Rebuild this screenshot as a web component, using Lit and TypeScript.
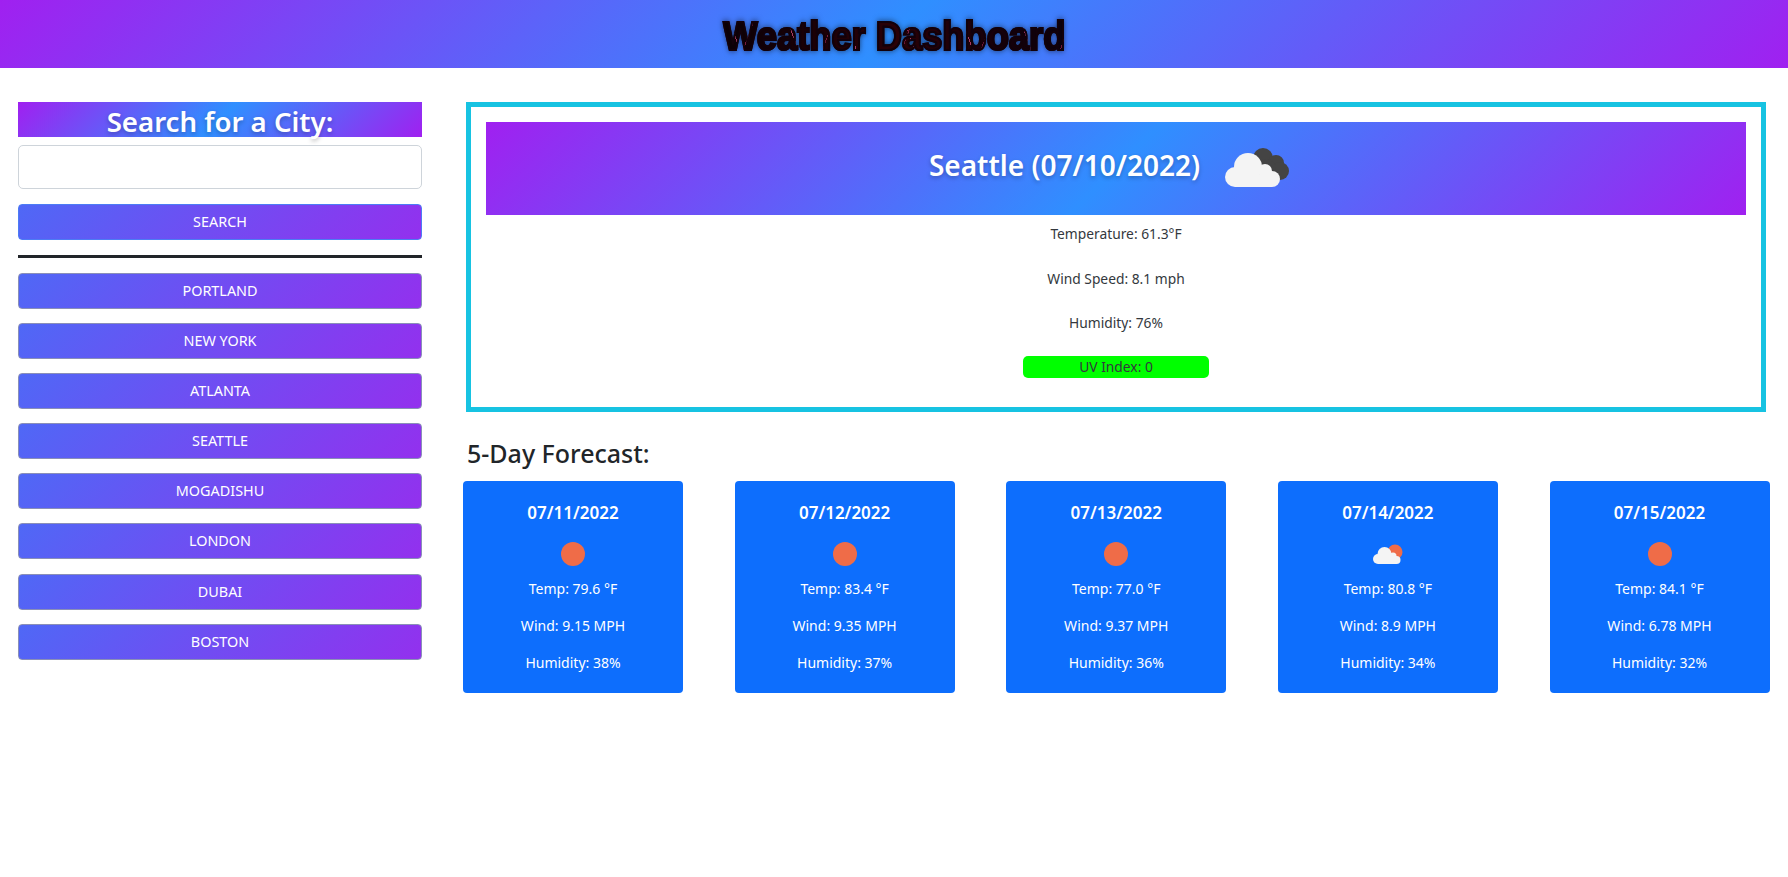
import { LitElement, html, css, svg } from 'lit';
import { customElement, state } from 'lit/decorators.js';

interface Forecast {
  date: string;
  temp: string;
  wind: string;
  humidity: string;
  cloudy?: boolean;
}

// same cloud for the big icon (110x70) and, scaled down, the small one
const cloud = svg`
  <circle cx="48" cy="28" r="14" fill="#f4f4f4" />
  <circle cx="35" cy="38" r="10" fill="#f4f4f4" />
  <circle cx="65" cy="32" r="7" fill="#f4f4f4" />
  <circle cx="72" cy="40" r="8" fill="#f4f4f4" />
  <rect x="35" y="36" width="37" height="12" fill="#f4f4f4" />
`;

@customElement('app-root')
export class AppRoot extends LitElement {
  @state() private cities = ['Portland', 'New York', 'Atlanta', 'Seattle', 'Mogadishu', 'London', 'Dubai', 'Boston'];
  @state() private forecast: Forecast[] = [
    { date: '07/11/2022', temp: '79.6', wind: '9.15', humidity: '38' },
    { date: '07/12/2022', temp: '83.4', wind: '9.35', humidity: '37' },
    { date: '07/13/2022', temp: '77.0', wind: '9.37', humidity: '36' },
    { date: '07/14/2022', temp: '80.8', wind: '8.9', humidity: '34', cloudy: true },
    { date: '07/15/2022', temp: '84.1', wind: '6.78', humidity: '32' },
  ];

  static styles = css`
    :host {
      display: block;
      min-height: 877px;
      background: #fff;
      color: #212529;
      font-family: "Noto Sans", "Open Sans", sans-serif;
    }
    .banner {
      background-image: linear-gradient(135deg, #a020f0, #2f8fff, #a020f0);
    }
    header {
      height: 68px;
      display: flex;
      align-items: center;
      justify-content: center;
    }
    header h1 {
      margin: 4px 0 0;
      font-family: "Liberation Sans", sans-serif;
      font-size: 41px;
      font-weight: 700;
      line-height: 60px;
      white-space: nowrap;
      transform: scaleX(0.885);
      -webkit-text-stroke: 2.2px #12000a;
      /* scratched texture inside the letters */
      background-image:
        repeating-linear-gradient(68deg, transparent 0 23px, #a83a62 23px 24px, transparent 24px 61px),
        repeating-linear-gradient(112deg, transparent 0 37px, #7a1c3c 37px 38px, transparent 38px 83px),
        linear-gradient(90deg, #0a0006, #2a0006 50%, #0a000c);
      -webkit-background-clip: text;
      background-clip: text;
      -webkit-text-fill-color: transparent;
      filter: drop-shadow(0 0 3px rgba(0, 0, 0, 0.55));
    }
    .page {
      display: flex;
      padding: 34px 0 0 18px;
    }
    aside {
      width: 404px;
      flex: none;
    }
    aside h2 {
      margin: 0;
      height: 35px;
      padding-top: 2px;
      box-sizing: border-box;
      line-height: 35px;
      text-align: center;
      color: #fff;
      font-size: 27.6px;
      font-weight: 600;
      white-space: nowrap;
      text-shadow: 0 2px 4px rgba(0, 0, 0, 0.25);
    }
    input {
      display: block;
      box-sizing: border-box;
      width: 100%;
      height: 44px;
      margin-top: 8px;
      border: 1px solid #ced4da;
      border-radius: 5px;
      background: #fff;
    }
    button {
      display: block;
      box-sizing: border-box;
      width: 100%;
      height: 36px;
      padding: 0 0 1px;
      border: 1px solid #8a8fb8;
      border-radius: 4px;
      background-image: linear-gradient(135deg, #4f68f6, #9330ee);
      color: #fff;
      font: inherit;
      font-size: 14.4px;
      text-transform: uppercase;
    }
    button.search {
      margin-top: 15px;
      border-color: #4d7cf5;
    }
    hr {
      height: 3px;
      margin: 14.5px 0 15px;
      border: 0;
      background: #212529;
    }
    .cities {
      display: flex;
      flex-direction: column;
      gap: 14.2px;
    }
    main {
      margin-left: 44px;
      width: 1300px;
      flex: none;
    }
    .current {
      box-sizing: border-box;
      height: 310px;
      padding: 15px;
      border: 5px solid #17c3e2;
      display: flex;
      flex-direction: column;
      align-items: center;
    }
    .current .title {
      align-self: stretch;
      height: 93px;
      display: flex;
      align-items: center;
      justify-content: center;
    }
    .title h2 {
      margin: 0 0 8px;
      color: #fff;
      font-size: 28px;
      font-weight: 600;
      text-shadow: 0 2px 4px rgba(0, 0, 0, 0.25);
    }
    .title svg {
      width: 110px;
      height: 70px;
      margin: 11px -7px 0 0;
    }
    .current p {
      margin: 24.7px 0 0;
      color: #33383d;
      font-size: 13.8px;
      line-height: 20px;
    }
    .current .title + p {
      margin-top: 9px;
    }
    .current p.uv {
      width: 186px;
      height: 22px;
      margin-top: 22.6px;
      border-radius: 5px;
      background: #00ff00;
      line-height: 22px;
      text-align: center;
    }
    h3 {
      margin: 26px 0 13px 1px;
      font-size: 25px;
      line-height: 30px;
      font-weight: 500;
    }
    .cards {
      display: flex;
      justify-content: space-between;
      margin: 0 -3.5px 0 -3px;
    }
    .card {
      box-sizing: border-box;
      width: 220px;
      height: 212px;
      padding-top: 22px;
      border-radius: 4px;
      background: #0d6efd;
      color: #fff;
      text-align: center;
    }
    .card h4 {
      margin: 0;
      font-size: 17px;
      line-height: 20px;
      font-weight: 600;
    }
    .card svg {
      display: block;
      width: 60px;
      height: 24px;
      margin: 19px auto 0;
    }
    .card p {
      margin: 17px 0 0;
      font-size: 14px;
      line-height: 20px;
    }
    .card svg + p {
      margin-top: 13px;
    }
  `;

  private renderIcon(cloudy?: boolean) {
    if (cloudy) {
      return html`<svg viewBox="0 0 60 24">
        <circle cx="37" cy="10" r="7.5" fill="#ef6c48" />
        <g transform="translate(2.5 -2) scale(0.5)">${cloud}</g>
      </svg>`;
    }
    return html`<svg viewBox="0 0 60 24"><circle cx="30" cy="12" r="12" fill="#ef6c48" /></svg>`;
  }

  render() {
    return html`
      <header class="banner"><h1>Weather Dashboard</h1></header>
      <div class="page">
        <aside>
          <h2 class="banner">Search for a City:</h2>
          <input type="text" />
          <button class="search">Search</button>
          <hr />
          <div class="cities">
            ${this.cities.map((c) => html`<button>${c}</button>`)}
          </div>
        </aside>
        <main>
          <section class="current">
            <div class="title banner">
              <h2>Seattle (07/10/2022)</h2>
              <svg viewBox="0 0 110 70">
                <circle cx="63" cy="19" r="10" fill="#444" />
                <circle cx="76" cy="24" r="8" fill="#444" />
                <circle cx="80" cy="32" r="9" fill="#444" />
                <circle cx="66" cy="30" r="10" fill="#444" />
                ${cloud}
              </svg>
            </div>
            <p>Temperature: 61.3°F</p>
            <p>Wind Speed: 8.1 mph</p>
            <p>Humidity: 76%</p>
            <p class="uv">UV Index: 0</p>
          </section>
          <h3>5-Day Forecast:</h3>
          <div class="cards">
            ${this.forecast.map((f) => html`
              <div class="card">
                <h4>${f.date}</h4>
                ${this.renderIcon(f.cloudy)}
                <p>Temp: ${f.temp} °F</p>
                <p>Wind: ${f.wind} MPH</p>
                <p>Humidity: ${f.humidity}%</p>
              </div>
            `)}
          </div>
        </main>
      </div>
    `;
  }
}
